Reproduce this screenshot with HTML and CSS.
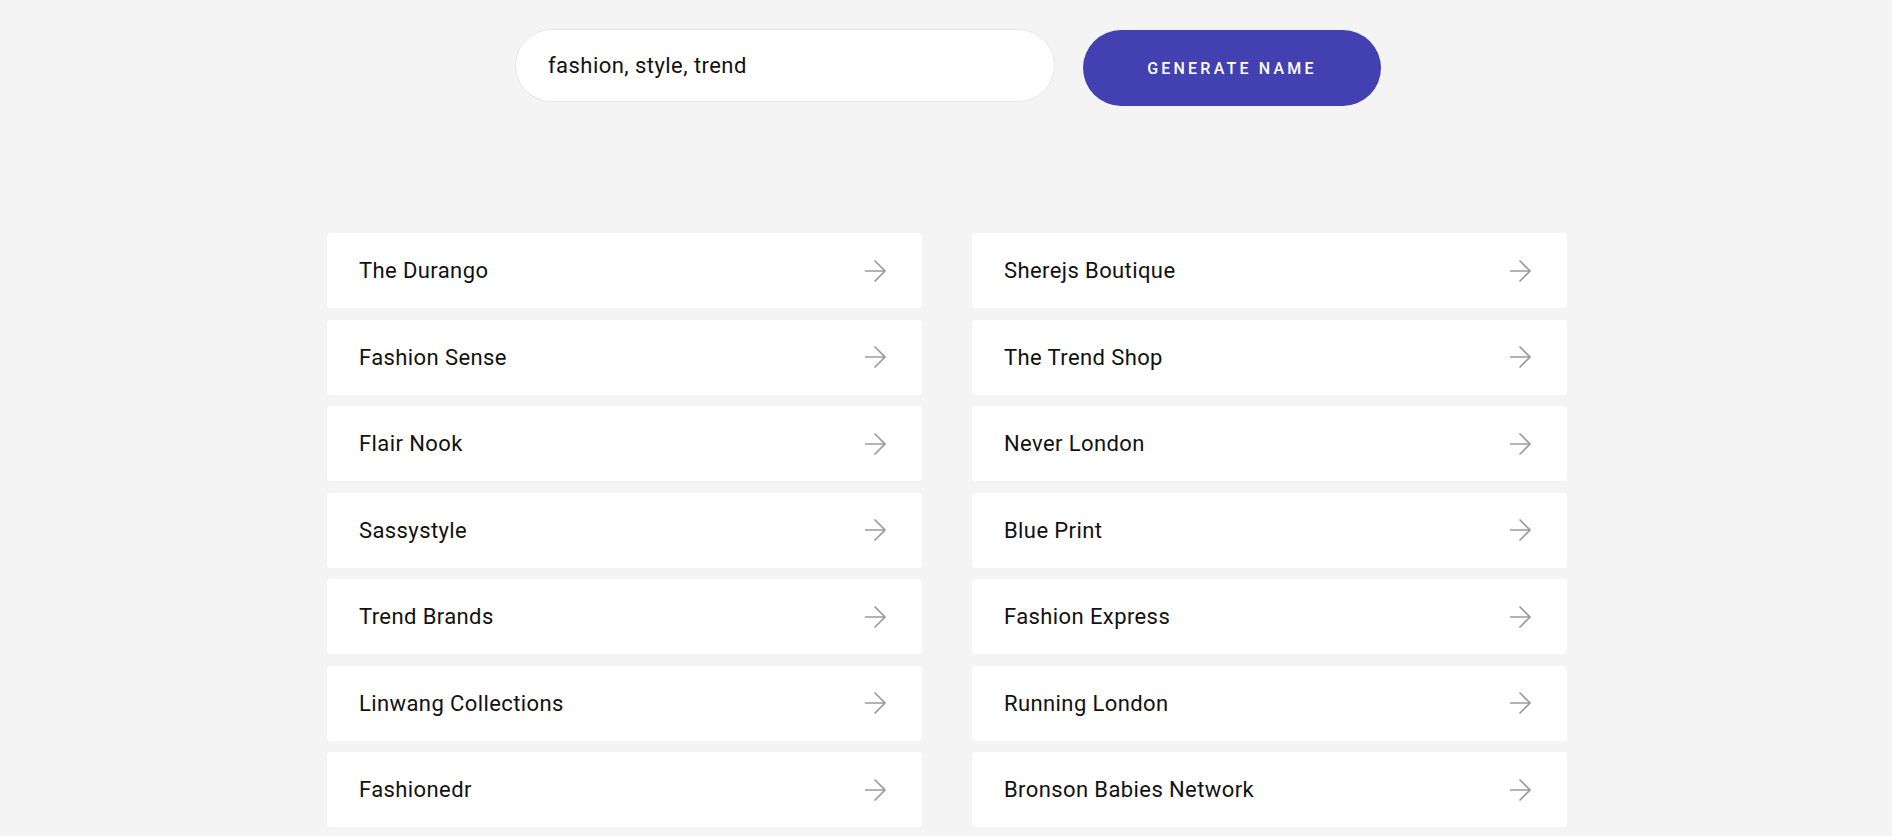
FILE: index.html
```html
<!DOCTYPE html>
<html lang="en">
<head>
  <meta charset="UTF-8">
  <title>Business Name Generator</title>
  <link rel="stylesheet" href="styles.css">
</head>
<body>
  <div class="search-row">
    <input type="text" class="keywords" value="fashion, style, trend">
    <button class="generate-btn">Generate Name</button>
  </div>

  <div class="names">
    <a class="name-card" href="#"><span>The Durango</span><svg class="arrow" viewBox="0 0 22 22"><path d="M1 11H21M10.5 0.5L21 11L10.5 21.5"/></svg></a>
    <a class="name-card" href="#"><span>Sherejs Boutique</span><svg class="arrow" viewBox="0 0 22 22"><path d="M1 11H21M10.5 0.5L21 11L10.5 21.5"/></svg></a>
    <a class="name-card" href="#"><span>Fashion Sense</span><svg class="arrow" viewBox="0 0 22 22"><path d="M1 11H21M10.5 0.5L21 11L10.5 21.5"/></svg></a>
    <a class="name-card" href="#"><span>The Trend Shop</span><svg class="arrow" viewBox="0 0 22 22"><path d="M1 11H21M10.5 0.5L21 11L10.5 21.5"/></svg></a>
    <a class="name-card" href="#"><span>Flair Nook</span><svg class="arrow" viewBox="0 0 22 22"><path d="M1 11H21M10.5 0.5L21 11L10.5 21.5"/></svg></a>
    <a class="name-card" href="#"><span>Never London</span><svg class="arrow" viewBox="0 0 22 22"><path d="M1 11H21M10.5 0.5L21 11L10.5 21.5"/></svg></a>
    <a class="name-card" href="#"><span>Sassystyle</span><svg class="arrow" viewBox="0 0 22 22"><path d="M1 11H21M10.5 0.5L21 11L10.5 21.5"/></svg></a>
    <a class="name-card" href="#"><span>Blue Print</span><svg class="arrow" viewBox="0 0 22 22"><path d="M1 11H21M10.5 0.5L21 11L10.5 21.5"/></svg></a>
    <a class="name-card" href="#"><span>Trend Brands</span><svg class="arrow" viewBox="0 0 22 22"><path d="M1 11H21M10.5 0.5L21 11L10.5 21.5"/></svg></a>
    <a class="name-card" href="#"><span>Fashion Express</span><svg class="arrow" viewBox="0 0 22 22"><path d="M1 11H21M10.5 0.5L21 11L10.5 21.5"/></svg></a>
    <a class="name-card" href="#"><span>Linwang Collections</span><svg class="arrow" viewBox="0 0 22 22"><path d="M1 11H21M10.5 0.5L21 11L10.5 21.5"/></svg></a>
    <a class="name-card" href="#"><span>Running London</span><svg class="arrow" viewBox="0 0 22 22"><path d="M1 11H21M10.5 0.5L21 11L10.5 21.5"/></svg></a>
    <a class="name-card" href="#"><span>Fashionedr</span><svg class="arrow" viewBox="0 0 22 22"><path d="M1 11H21M10.5 0.5L21 11L10.5 21.5"/></svg></a>
    <a class="name-card" href="#"><span>Bronson Babies Network</span><svg class="arrow" viewBox="0 0 22 22"><path d="M1 11H21M10.5 0.5L21 11L10.5 21.5"/></svg></a>
  </div>
</body>
</html>
```

FILE: styles.css
```css
body{
  margin: 0;
  background-color: #f4f4f4;
  font-family: Roboto, "Liberation Sans", sans-serif;
  color: #111;
}
.search-row{
  display: flex;
  justify-content: center;
  align-items: flex-start;
  gap: 28px;
  padding-top: 29px;
  padding-left: 4px;
}
.keywords{
  box-sizing: border-box;
  width: 540px;
  height: 73px;
  padding: 0 32px;
  border: 1px solid #e6e6e6;
  border-radius: 40px;
  background: white;
  font-family: Roboto, "Liberation Sans", sans-serif;
  font-size: 22px;
  letter-spacing: 0.45px;
  color: #111;
  outline: none;
}
.generate-btn{
  width: 298px;
  height: 76px;
  margin-top: 1px;
  border: none;
  border-radius: 40px;
  background-color: #4341b1;
  color: white;
  font-family: Roboto, "Liberation Sans", sans-serif;
  font-size: 16px;
  font-weight: 500;
  letter-spacing: 3.2px;
  text-transform: uppercase;
  cursor: pointer;
}
.names{
  display: grid;
  grid-template-columns: 1fr 1fr;
  column-gap: 50px;
  row-gap: 11.5px;
  width: 1240px;
  margin: 127px 0 0 calc(50% - 619px);
}
.name-card{
  box-sizing: border-box;
  height: 75px;
  display: flex;
  align-items: center;
  justify-content: space-between;
  padding: 0 36px 0 32px;
  background: white;
  border-radius: 4px;
  color: #111;
  text-decoration: none;
  font-size: 22px;
  letter-spacing: 0.4px;
}
.arrow{
  width: 22px;
  height: 22px;
  fill: none;
  stroke: #9b9ca2;
  stroke-width: 1.6;
}
```
